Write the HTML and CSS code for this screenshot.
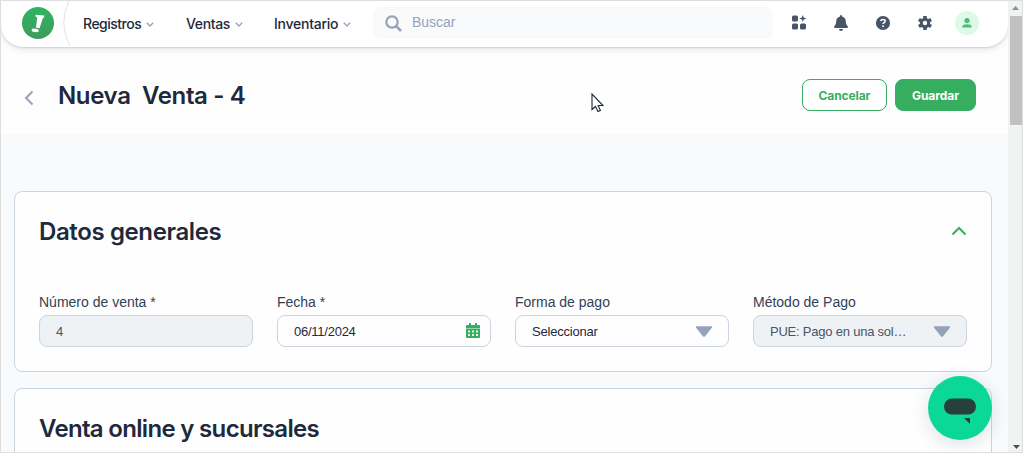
FILE: index.html
```html
<!DOCTYPE html>
<html lang="es">
<head>
<meta charset="utf-8">
<title>Nueva Venta</title>
<link rel="stylesheet" href="styles.css">
</head>
<body>
<div class="window">
  <div class="page">
    <header class="topbar">
      <div class="brand">
        <svg class="logo" width="32" height="32" viewBox="0 0 32 32"><defs><linearGradient id="g" x1="0" y1="0" x2="0" y2="1"><stop offset="0" stop-color="#2fb463"/><stop offset="1" stop-color="#3f9c5c"/></linearGradient></defs><circle cx="16" cy="16" r="16" fill="url(#g)"/><path d="M13.500 7.800 22.300 8.600 22.100 10.400 20.900 10.900 17.600 21.200 14 20.800 15.200 10.400 13.500 9.600Z" fill="#fff"/><ellipse cx="13.200" cy="23.400" rx="3.600" ry="1.700" transform="rotate(8 13.2 23.4)" fill="#fff"/></svg>
        <svg class="arc" width="10" height="46" viewBox="0 0 10 46"><path d="M6 0Q-5 22 7 45" fill="none" stroke="#dde3ea"/></svg>
      </div>
      <nav class="nav">
        <a class="nav-item registros"><span>Registros</span><svg width="8" height="5" viewBox="0 0 8 5"><path d="M.8.8 4 4 7.2.8"/></svg></a>
        <a class="nav-item ventas"><span>Ventas</span><svg width="8" height="5" viewBox="0 0 8 5"><path d="M.8.8 4 4 7.2.8"/></svg></a>
        <a class="nav-item inventario"><span>Inventario</span><svg width="8" height="5" viewBox="0 0 8 5"><path d="M.8.8 4 4 7.2.8"/></svg></a>
      </nav>
      <div class="search">
        <svg width="17" height="17" viewBox="0 0 17 17"><circle cx="7" cy="7" r="5.7" fill="none" stroke="#94a3b8" stroke-width="2.2"/><path d="M11.2 11.2 16 16" stroke="#94a3b8" stroke-width="2.5"/></svg>
        <span>Buscar</span>
      </div>
      <div class="tools">
        <svg width="16" height="16" viewBox="0 0 16 16" fill="#475569"><rect x="1" y="0.500" width="6" height="6" rx="1.6"/><rect x="1" y="8.500" width="6" height="6" rx="1.6"/><rect x="9" y="8.500" width="6" height="6" rx="1.6"/><path d="M11.8 0 12.7 2.600 15.400 3.500 12.7 4.400 11.8 7 10.9 4.400 8.200 3.500 10.9 2.600Z"/></svg>
        <svg width="16" height="16" viewBox="0 0 16 16" fill="#475569"><path d="M8 0a1 1 0 0 1 1 1v.5A5 5 0 0 1 12.8 6.3C12.8 9 13.6 10 14.6 11.1 15.3 12 14.9 13 14 13H2C1.100 13 .7 12 1.400 11.100 2.400 10 3.200 9 3.200 6.300A5 5 0 0 1 7 1.500V1A1 1 0 0 1 8 0ZM6 14h4a2 2 0 0 1-4 0Z"/></svg>
        <svg width="16" height="16" viewBox="0 0 16 16"><circle cx="8" cy="8" r="7.100" fill="#475569"/><path d="M5.900 6.100C6 4.100 10.200 4 10.200 6.200 10.200 7.600 8 7.500 8 9" fill="none" stroke="#fff" stroke-width="1.500"/><rect x="7.200" y="10.400" width="1.700" height="1.600" fill="#fff"/></svg>
        <svg width="16" height="16" viewBox="0 0 16 16"><g stroke="#475569" stroke-width="3.600"><path d="M8 1V15M1.900 4.500 14.100 11.500M1.900 11.500 14.100 4.500"/></g><circle cx="8" cy="8" r="5.200" fill="#475569"/><circle cx="8" cy="8" r="2.200" fill="#fff"/></svg>
      </div>
      <div class="avatar"><svg width="10" height="10" viewBox="0 0 10 10" fill="#4fbd79"><circle cx="5" cy="2.600" r="2.600"/><path d="M.4 9.500V8.300Q.8 6.300 5 6.300T9.600 8.300V9.500Z"/></svg></div>
    </header>

    <section class="heading">
      <svg class="back" width="10" height="16" viewBox="0 0 10 16"><path d="M8.500 1.500 2 8 8.500 14.500" fill="none" stroke="#94a3b8" stroke-width="2"/></svg>
      <h1>Nueva&nbsp; Venta - 4</h1>
      <div class="actions">
        <button class="btn cancel">Cancelar</button>
        <button class="btn save">Guardar</button>
      </div>
    </section>

    <main class="content">
      <section class="card">
        <div class="card-head">
          <h2 class="general">Datos generales</h2>
          <svg class="collapse" width="16" height="10" viewBox="0 0 16 10"><path d="M1.500 8.500 8 2 14.500 8.500" fill="none" stroke="#36ae60" stroke-width="2"/></svg>
        </div>
        <div class="fields">
          <div class="field"><label>Número de venta *</label><div class="control disabled"><span>4</span></div></div>
          <div class="field"><label>Fecha *</label><div class="control date"><span class="date-text">06/11/2024</span>
            <svg width="14" height="15" viewBox="0 0 14 15"><path d="M3 0H5V2H9V0H11V2H13Q14 2 14 3V6H0V3Q0 2 1 2H3Z" fill="#36ae60"/><path d="M0 6H14V14Q14 15 13 15H1Q0 15 0 14Z" fill="#36ae60"/><path d="M0 5.500H14" stroke="#91d5a8"/><path d="M2 7.500h2v2h-2zM6 7.500h2v2h-2zM10 7.500h2v2h-2zM2 11h2v2h-2zM6 11h2v2h-2zM10 11h2v2h-2z" fill="#e2f5e8"/></svg></div></div>
          <div class="field"><label>Forma de pago</label><div class="control"><span class="choice">Seleccionar</span><svg width="18" height="11" viewBox="0 0 18 11"><path d="M1.500 1H16.500L9.600 9.800Q9 10.400 8.400 9.800Z" fill="#94a3b8" stroke="#94a3b8" stroke-width="1.400" stroke-linejoin="round"/></svg></div></div>
          <div class="field"><label>Método de Pago</label><div class="control disabled"><span class="method">PUE: Pago en una sol…</span><svg width="18" height="11" viewBox="0 0 18 11"><path d="M1.500 1H16.500L9.600 9.800Q9 10.400 8.400 9.800Z" fill="#94a3b8" stroke="#94a3b8" stroke-width="1.400" stroke-linejoin="round"/></svg></div></div>
        </div>
      </section>
      <section class="card next">
        <div class="card-head"><h2 class="online">Venta online y sucursales</h2></div>
      </section>
    </main>
  </div>
  <div class="scrollbar">
    <svg width="7" height="4" viewBox="0 0 7 4"><path d="M0 4 3.500 0 7 4Z" fill="#8b9095"/></svg>
    <div class="thumb"></div>
    <svg class="down" width="7" height="4" viewBox="0 0 7 4"><path d="M0 0 3.500 4 7 0Z" fill="#475060"/></svg>
  </div>
  <div class="chat"><svg width="32" height="27" viewBox="0 0 32 27"><rect y="0.500" width="32" height="16" rx="8" fill="#28403b"/><path d="M20 20H26V26Z" fill="#28403b"/></svg></div>
  <svg class="cursor" width="13" height="20" viewBox="0 0 13 20"><path d="M1 1V16.500L4.500 13.500 7 18.500 9.400 17.400 7.200 12.500H12Z" fill="#fff" stroke="#20263a" stroke-width="1.100"/></svg>
</div>
</body>
</html>
```
FILE: styles.css
```css
* { box-sizing: border-box; }
body { margin: 0; overflow: hidden; font-family: "Liberation Sans", Arial, sans-serif; color: #1e293b; }
.window { position: relative; display: flex; width: 1023px; height: 453px; border: 1px solid #dedede; background: #f8fafc; overflow: hidden; }
.page { width: 1007px; height: 451px; overflow: hidden; background: linear-gradient(#fefefe 0 133px, #f8fafc 133px); }
.topbar { display: flex; height: 46px; background: #fff; border-radius: 0 0 22px 22px; box-shadow: 0 1px 2px #cbd2da, 0 3px 6px #e8edf2; }
.brand { display: flex; width: 82px; padding-left: 21px; }
.logo { margin-top: 6px; }
.arc { margin-left: 9px; }
.nav { display: flex; width: 290px; height: 45px; font: 500 14px Inter, sans-serif; }
.nav-item { display: flex; align-items: center; gap: 5px; white-space: nowrap; }
.nav-item svg { margin-top: 1px; fill: none; stroke: #94a3b8; stroke-width: 1.3; }
.registros { width: 103px; letter-spacing: -0.5px; }
.ventas { width: 88px; letter-spacing: -0.35px; }
.inventario { letter-spacing: -0.26px; }
.nav-item span { flex: none; }
.search { display: flex; align-items: center; gap: 10px; width: 400px; height: 32px; margin-top: 6px; padding-left: 12px; border-radius: 8px; background: #f8fafc; font-size: 14px; color: #94a3b8; }
.search span { margin-top: -2px; letter-spacing: -0.05px; }
.tools { display: flex; gap: 26px; margin: 14px 0 0 18px; }
.avatar { display: grid; place-items: center; width: 24px; height: 24px; margin: 10px 0 0 22px; border-radius: 50%; background: #dcfae6; }
.heading { display: flex; align-items: center; height: 87px; padding: 10px 32px 0 23px; }
.back { margin-top: 5px; }
h1, h2 { margin: 0; font-family: Inter, sans-serif; font-weight: 600; white-space: nowrap; line-height: 30px; }
h1 { margin-left: 24px; font-size: 24px; letter-spacing: -0.35px; }
h2 { font-size: 24px; }
.actions { display: flex; gap: 8px; margin: -1px 0 0 auto; }
.btn { height: 32px; padding: 0; border: 1px solid #36ae60; border-radius: 8px; font: 700 12px Inter, sans-serif; }
.cancel { width: 85px; background: #fff; color: #36ae60; letter-spacing: -0.1px; }
.save { width: 81px; background: #36ae60; color: #fff; letter-spacing: -0.05px; }
.content { padding: 57px 16px 0 13px; }
.card { height: 181px; padding: 24px 24px 0; border: 1px solid #cbd5e1; border-radius: 8px; background: #fefefe; }
.next { margin-top: 16px; }
.card-head { display: flex; align-items: center; justify-content: space-between; height: 32px; }
.collapse { margin-top: -2px; }
.general { letter-spacing: -0.38px; }
.online { letter-spacing: -0.68px; }
.fields { display: grid; grid-template-columns: repeat(4, 214px); gap: 24px; margin-top: 46px; }
.field label { display: block; height: 21px; line-height: 17px; font-size: 14px; color: #334155; white-space: nowrap; }
.control { display: flex; align-items: center; justify-content: space-between; height: 32px; padding: 0 15px 0 16px; border: 1px solid #cbd5e1; border-radius: 8px; background: #fefefe; font-size: 13px; white-space: nowrap; }
.control.date { padding-right: 10px; }
.date svg { margin-top: -1px; }
.disabled { background: #eff2f5; color: #475569; }
.date-text { letter-spacing: -0.25px; }
.choice { letter-spacing: -0.2px; }
.method { letter-spacing: -0.22px; }
.scrollbar { display: flex; flex-direction: column; align-items: center; width: 14px; height: 451px; padding-top: 5px; background: #f1f3f3; }
.thumb { width: 12px; height: 109px; margin: 6px 0 0 2px; background: #c1c1c1; }
.down { margin: auto 0 3px 3px; }
.chat { position: absolute; left: 927px; top: 375px; display: grid; place-items: center; width: 64px; height: 64px; border-radius: 50%; background: #0bd895; box-shadow: 0 4px 18px rgba(30, 55, 70, .15); }
.chat svg { margin-top: 7px; }
.cursor { position: absolute; left: 590px; top: 92px; }
```
